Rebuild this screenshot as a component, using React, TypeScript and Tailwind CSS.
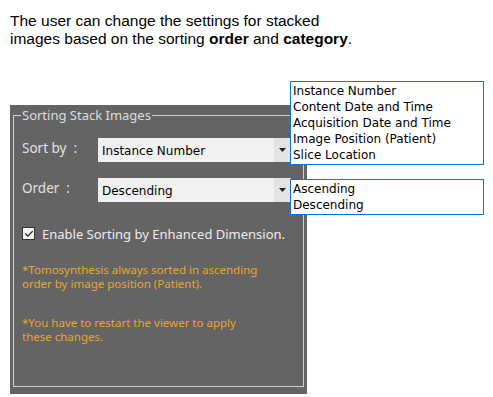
import { Check } from 'lucide-react';

const sortOptions = [
  'Instance Number',
  'Content Date and Time',
  'Acquisition Date and Time',
  'Image Position (Patient)',
  'Slice Location',
];

const orderOptions = ['Ascending', 'Descending'];

function Select({ value }: { value: string }) {
  return (
    <div className="flex h-[24px] w-[193px] items-stretch bg-[#f0f0f0]">
      <span className="flex-1 pl-[4px] pt-[5px] font-['DejaVu_Sans',sans-serif] text-[12px] leading-[16px] text-black">
        {value}
      </span>
      <span className="flex w-[17px] items-center justify-center bg-[#e3e3e3]">
        <svg width="7" height="4" viewBox="0 0 7 4">
          <path d="M0 0h7L3.5 4z" fill="#222" />
        </svg>
      </span>
    </div>
  );
}

function DropList({ items, className }: { items: string[]; className: string }) {
  return (
    <ul
      className={`absolute w-[194px] border border-[#0b74d4] bg-white px-[2px] py-[1px] font-['DejaVu_Sans',sans-serif] text-[12px] leading-[16px] text-black ${className}`}
    >
      {items.map((item) => (
        <li key={item}>{item}</li>
      ))}
    </ul>
  );
}

export default function App() {
  return (
    <div className="relative h-[397px] w-[493px] overflow-hidden bg-white">
      <p className="pl-[10px] pt-[12px] font-['Liberation_Sans',Arial,sans-serif] text-[15.5px] leading-[18px] text-black">
        The user can change the settings for stacked
        <br />
        images based on the sorting <b>order</b> and <b>category</b>.
      </p>

      {/* Settings panel */}
      <div className="ml-[10px] mt-[57px] h-[289px] w-[297px] bg-[#646464] px-[3px] pt-[1px] font-['Noto_Sans',sans-serif]">
        <fieldset className="h-[281px] border border-[#cfcfcf] pl-[8px] pr-[10px]">
          <legend className="-ml-[1px] px-[1px] text-[13px] leading-[18px] text-[#dcdcdc]">
            Sorting Stack Images
          </legend>

          <div className="mt-[14px] flex items-center">
            <span className="w-[76px] pb-[4px] text-[13.5px] text-[#e2e2e2]">Sort by&nbsp;&nbsp;:</span>
            <Select value="Instance Number" />
          </div>
          <div className="mt-[16px] flex items-center">
            <span className="w-[76px] pb-[4px] text-[13.5px] text-[#e2e2e2]">Order&nbsp;&nbsp;:</span>
            <Select value="Descending" />
          </div>

          <label className="mt-[22px] flex items-center gap-[7px] whitespace-nowrap text-[13px] leading-[18px] text-[#ececec]">
            <span className="flex h-[13px] w-[13px] shrink-0 items-center justify-center border border-[#333] bg-[#f4f4f4]">
              <Check className="h-[10px] w-[10px] text-[#222]" strokeWidth={3} />
            </span>
            Enable Sorting by Enhanced Dimension.
          </label>

          <p className="mt-[20px] text-[11.5px] leading-[14px] text-[#e7a52e]">
            *Tomosynthesis always sorted in ascending
            <br />
            order by image position (Patient).
          </p>
          <p className="mt-[25px] text-[11.5px] leading-[14px] text-[#e7a52e]">
            *You have to restart the viewer to apply
            <br />
            these changes.
          </p>
        </fieldset>
      </div>

      <DropList items={sortOptions} className="left-[290px] top-[81px]" />
      <DropList items={orderOptions} className="left-[290px] top-[179px]" />
    </div>
  );
}
